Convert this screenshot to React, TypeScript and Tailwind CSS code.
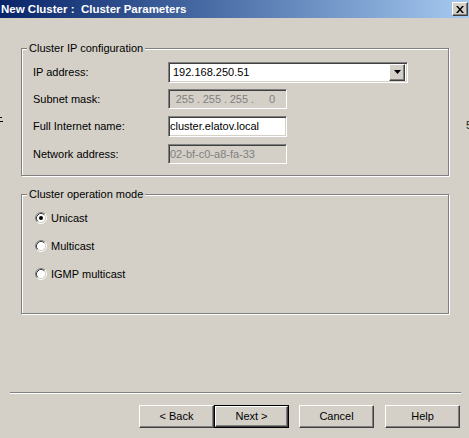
import React from "react";

const raised =
  "border border-t-white border-l-white border-b-[#404040] border-r-[#404040] shadow-[inset_-1px_-1px_0_#808080]";
const sunken =
  "border border-t-[#808080] border-l-[#808080] border-b-white border-r-white shadow-[inset_1px_1px_0_#404040,inset_-1px_-1px_0_#d4d0c8]";

function Radio({ checked }: { checked?: boolean }) {
  return (
    <svg width="12" height="12" viewBox="0 0 12 12" className="shrink-0">
      <circle cx="6" cy="6" r="4.5" fill="#ffffff" />
      <path d="M2.11 9.89 A5.5 5.5 0 0 1 9.89 2.11" stroke="#808080" fill="none" strokeWidth="1" />
      <path d="M9.89 2.11 A5.5 5.5 0 0 1 2.11 9.89" stroke="#ffffff" fill="none" strokeWidth="1" />
      <path d="M2.82 9.18 A4.5 4.5 0 0 1 9.18 2.82" stroke="#404040" fill="none" strokeWidth="1" />
      <path d="M9.18 2.82 A4.5 4.5 0 0 1 2.82 9.18" stroke="#d4d0c8" fill="none" strokeWidth="1" />
      {checked && <circle cx="6" cy="6" r="2" fill="#000000" />}
    </svg>
  );
}

function Button({ label, def }: { label: string; def?: boolean }) {
  if (def) {
    return (
      <div className="w-[75px] h-[23px] border border-black flex">
        <div className={`flex-1 flex items-center justify-center ${raised}`}>{label}</div>
      </div>
    );
  }
  return (
    <div className={`w-[75px] h-[23px] flex items-center justify-center ${raised}`}>{label}</div>
  );
}

function Group({ title, className, children }: { title: string; className?: string; children?: React.ReactNode }) {
  return (
    <div
      className={`ml-[21px] w-[428px] border border-[#808080] shadow-[1px_1px_0_#ffffff,inset_1px_1px_0_#ffffff] flex flex-col ${className ?? ""}`}
    >
      <div className="-mt-[8px] ml-[5px] px-[2px] h-[14px] leading-[14px] bg-[#d4d0c8] self-start">{title}</div>
      {children}
    </div>
  );
}

export default function App() {
  return (
    <div className="w-[469px] h-[438px] bg-[#d4d0c8] relative overflow-hidden flex flex-col font-['Liberation_Sans',Arial,sans-serif] text-[11px] text-black">
      {/* Title bar */}
      <div className="h-[18px] shrink-0 flex items-center justify-between bg-gradient-to-r from-[#0a246a] to-[#a6caf0] pl-[1px] pr-[1px]">
        <span className="text-white font-bold text-[11.5px] whitespace-pre leading-[18px]">New Cluster :  Cluster Parameters</span>
        <div className={`w-[16px] h-[14px] bg-[#d4d0c8] flex items-center justify-center ${raised}`}>
          <svg width="8" height="7" viewBox="0 0 8 7">
            <path d="M0 0 L2 0 L4 2.5 L6 0 L8 0 L5 3.5 L8 7 L6 7 L4 4.5 L2 7 L0 7 L3 3.5 Z" fill="#000" />
          </svg>
        </div>
      </div>

      {/* Cluster IP configuration */}
      <Group title="Cluster IP configuration" className="mt-[30px] h-[128px]">
        <div className="flex flex-col pl-[11px]">
          <div className="mt-[7px] h-[20px] flex items-center">
            <div className="w-[135px]">IP address:</div>
            <div className={`w-[240px] h-[21px] bg-white flex items-center p-[2px] ${sunken}`}>
              <div className="flex-1 pl-[2px]">192.168.250.51</div>
              <div className={`w-[16px] h-[17px] bg-[#d4d0c8] flex items-center justify-center ${raised}`}>
                <svg width="7" height="4" viewBox="0 0 7 4">
                  <path d="M0 0 L7 0 L3.5 4 Z" fill="#000" />
                </svg>
              </div>
            </div>
          </div>
          <div className="mt-[7px] h-[20px] flex items-center">
            <div className="w-[135px]">Subnet mask:</div>
            <div className={`w-[119px] h-[20px] bg-[#d4d0c8] flex items-center pl-[2px] text-[#808080] ${sunken}`}>
              {["255", "255", "255", "0"].map((n, i) => (
                <div key={i} className="flex w-[27px] shrink-0">
                  <span className="w-[23px] text-right">{n}</span>
                  {i < 3 && <span className="w-[4px] pl-[3px] whitespace-nowrap">.</span>}
                </div>
              ))}
            </div>
          </div>
          <div className="mt-[7px] h-[20px] flex items-center">
            <div className="w-[135px]">Full Internet name:</div>
            <div className={`w-[119px] h-[21px] bg-white flex items-center pl-[1px] ${sunken}`}>cluster.elatov.local</div>
          </div>
          <div className="mt-[8px] h-[20px] flex items-center">
            <div className="w-[135px]">Network address:</div>
            <div className={`w-[119px] h-[20px] bg-[#d4d0c8] flex items-center pl-[1px] text-[#808080] ${sunken}`}>02-bf-c0-a8-fa-33</div>
          </div>
        </div>
      </Group>

      {/* Cluster operation mode */}
      <Group title="Cluster operation mode" className="mt-[18px] h-[120px]">
        <div className="flex flex-col pl-[13px] mt-[9px] gap-[12px]">
          <div className="h-[16px] flex items-center gap-[4px]">
            <Radio checked />
            <span>Unicast</span>
          </div>
          <div className="h-[16px] flex items-center gap-[4px]">
            <Radio />
            <span>Multicast</span>
          </div>
          <div className="h-[16px] flex items-center gap-[4px]">
            <Radio />
            <span>IGMP multicast</span>
          </div>
        </div>
      </Group>

      {/* Separator */}
      <div className="mt-[78px] ml-[10px] w-[451px] h-[2px] border-t border-t-[#808080] border-b border-b-white" />

      {/* Buttons */}
      <div className="mt-[11px] ml-[139px] flex">
        <Button label="< Back" />
        <Button label="Next >" def />
        <div className="ml-[10px]">
          <Button label="Cancel" />
        </div>
        <div className="ml-[11px]">
          <Button label="Help" />
        </div>
      </div>

      {/* clipped fragments of neighbouring windows */}
      <div className="absolute left-0 top-[117px] w-[2px] h-[1px] bg-black" />
      <div className="absolute left-0 top-[121px] w-[3px] h-[1px] bg-black" />
      <div className="absolute left-[466px] top-[118px] text-[11px] text-[#202020] leading-[14px]">5</div>
    </div>
  );
}
